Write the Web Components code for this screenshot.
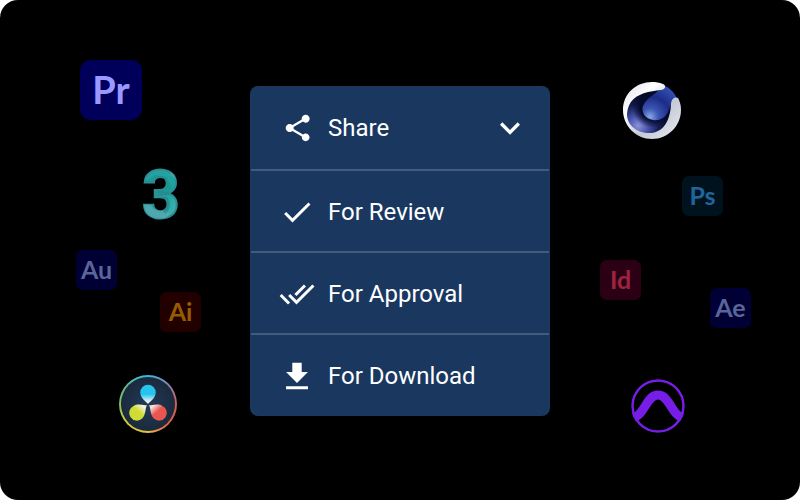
<!DOCTYPE html>
<html lang="en">
<head>
<meta charset="utf-8">
<meta name="viewport" content="width=device-width, initial-scale=1">
<title>Share</title>
<style>
  body {
    margin: 0;
    background: #fff;
    font-family: Roboto, "Liberation Sans", sans-serif;
  }
</style>
</head>
<body>

<share-stage>
  <app-tile slot="apps" size="large" style="--x: -320px; --y: -190px; --tile: #00005b; --ink: #9999ff">Pr</app-tile>
  <app-logo slot="apps" name="max" style="--x: -269px; --y: -100px"></app-logo>
  <app-tile slot="apps" style="--x: -324px; --y: 0px; --tile: #000035; --ink: #5a659a">Au</app-tile>
  <app-tile slot="apps" style="--x: -240px; --y: 42px; --tile: #220000; --ink: #985c00">Ai</app-tile>
  <app-logo slot="apps" name="resolve" style="--x: -281px; --y: 125px"></app-logo>

  <app-logo slot="apps" name="cinema" style="--x: 222px; --y: -170px"></app-logo>
  <app-tile slot="apps" style="--x: 282px; --y: -74px; --tile: #00121e; --ink: #1f659c">Ps</app-tile>
  <app-tile slot="apps" style="--x: 200px; --y: 10px; --tile: #2c0014; --ink: #9c2440">Id</app-tile>
  <app-tile slot="apps" style="--x: 310px; --y: 38px; --tile: #000035; --ink: #5a659a">Ae</app-tile>
  <app-logo slot="apps" name="protools" style="--x: 230px; --y: 128px"></app-logo>

  <share-menu>
    <menu-row icon="share" chevron>Share</menu-row>
    <menu-row icon="check">For Review</menu-row>
    <menu-row icon="checks">For Approval</menu-row>
    <menu-row icon="download">For Download</menu-row>
  </share-menu>
</share-stage>

<script>
const ICONS = {
  share: ['-2 -1.5 27 27', 'M18 16.08c-.76 0-1.44.3-1.96.77L8.91 12.7c.05-.23.09-.46.09-.7s-.04-.47-.09-.7l7.05-4.11c.54.5 1.25.81 2.04.81 1.66 0 3-1.34 3-3s-1.34-3-3-3-3 1.34-3 3c0 .24.04.47.09.7L8.04 9.81C7.5 9.31 6.79 9 6 9c-1.66 0-3 1.34-3 3s1.34 3 3 3c.79 0 1.5-.31 2.04-.81l7.12 4.16c-.05.21-.08.43-.08.65 0 1.61 1.31 2.92 2.92 2.92s2.92-1.31 2.92-2.92-1.31-2.92-2.92-2.92z'],
  check: ['0 0 24 24', 'M9 16.17 4.83 12l-1.42 1.41L9 19 21 7l-1.41-1.41z'],
  checks: ['0 0 24 24', 'M18 7l-1.41-1.41-6.34 6.34 1.41 1.41L18 7zm4.24-1.41L11.66 16.17 7.48 12l-1.41 1.41L11.66 19l12-12-1.42-1.41zM.41 13.41 6 19l1.41-1.41L1.83 12 .41 13.41z'],
  download: ['0.5 0 23 23', 'M19 9h-4V3H9v6H5l7 7 7-7zM5 18v2h14v-2H5z'],
  chevron: ['0 0 24 24', 'M16.59 8.59 12 13.17 7.41 8.59 6 10l6 6 6-6z']
}

const LOGOS = {
  max: `
    <svg width="60" height="90" viewBox="0 0 60 90">
      <defs>
        <linearGradient id="teal" x1="0" y1="0" x2="1" y2="1">
          <stop offset="0" stop-color="#2b9fa3"/>
          <stop offset=".6" stop-color="#1fa59d"/>
          <stop offset="1" stop-color="#6cc0c4"/>
        </linearGradient>
        <clipPath id="digit"><text x="30" y="68" class="three">3</text></clipPath>
      </defs>
      <text x="30" y="68" class="three" fill="url(#teal)" stroke="#2b8f96" stroke-width="2">3</text>
      <g clip-path="url(#digit)">
        <path d="M10 34h18c1-4 6-4 7 0 1 5-3 7-8 7v4h10l4-8-5-10-12-2z" fill="#1a8388" opacity=".35"/>
        <path d="M12 52l9 4c2 5 8 5 10 2l8 6-8 8H16z" fill="#5aa9b2" opacity=".8"/>
        <path d="M38 24c8 4 10 12 5 20 6 6 6 16-2 24h10V20z" fill="#62b3b9" opacity=".6"/>
        <path d="M26 47c9 0 11 4 9 9l-4 4 3 4c6-4 6-12 2-17z" fill="#1b7f86" opacity=".5"/>
      </g>
    </svg>`,
  resolve: `
    <svg class="ring" width="58" height="58" viewBox="0 0 60 60">
      <defs>
        <radialGradient id="disc"><stop offset="0" stop-color="#223a58"/><stop offset="1" stop-color="#1b2a3c"/></radialGradient>
        <linearGradient id="blue" x1="0" y1="0" x2="0" y2="1"><stop offset=".5" stop-color="#27c5ee"/><stop offset=".85" stop-color="#e6eef6"/></linearGradient>
        <linearGradient id="lime" x1="0" y1="1" x2="1" y2="0"><stop offset=".55" stop-color="#d0dc35"/><stop offset=".85" stop-color="#f4f4e6"/></linearGradient>
        <linearGradient id="red" x1="1" y1="1" x2="0" y2="0"><stop offset=".55" stop-color="#e9564f"/><stop offset=".85" stop-color="#f8e4e4"/></linearGradient>
      </defs>
      <circle cx="30" cy="30" r="28" fill="url(#disc)"/>
      <path d="M30 30c-2-3-8-6-8-12a8 8 0 0 1 16 0c0 6-6 9-8 12z" fill="url(#blue)"/>
      <path d="M29 31c-2 3-1 10-5 14a8 8 0 1 1-9-13c5-3 10 0 14-1z" fill="url(#lime)"/>
      <path d="M31 31c2 3 1 10 5 14a8 8 0 1 0 9-13c-5-3-10 0-14-1z" fill="url(#red)"/>
    </svg>`,
  cinema: `
    <svg width="60" height="60" viewBox="0 0 60 60">
      <defs>
        <radialGradient id="well" gradientUnits="userSpaceOnUse" cx="16" cy="46" r="30">
          <stop offset="0" stop-color="#8a92da"/>
          <stop offset=".35" stop-color="#4552a8"/>
          <stop offset=".7" stop-color="#141c50"/>
          <stop offset="1" stop-color="#070b28"/>
        </radialGradient>
        <radialGradient id="shade" gradientUnits="userSpaceOnUse" cx="31" cy="27" r="21">
          <stop offset=".6" stop-color="#050a2c"/>
          <stop offset="1" stop-color="#050a2c" stop-opacity="0"/>
        </radialGradient>
        <radialGradient id="drop" gradientUnits="userSpaceOnUse" cx="28" cy="37" r="34">
          <stop offset="0" stop-color="#8ba6e6"/>
          <stop offset=".25" stop-color="#3b56b4"/>
          <stop offset=".6" stop-color="#1c2c86"/>
          <stop offset="1" stop-color="#3350b4"/>
        </radialGradient>
        <linearGradient id="shell" x1="0" y1="0" x2="1" y2="1">
          <stop offset="0" stop-color="#d9dde8"/>
          <stop offset=".3" stop-color="#fff"/>
          <stop offset=".6" stop-color="#c4c9d6"/>
          <stop offset="1" stop-color="#eceef4"/>
        </linearGradient>
      </defs>
      <circle cx="30" cy="30" r="28" fill="url(#well)"/>
      <circle cx="31" cy="27" r="21" fill="url(#shade)"/>
      <path d="M41 5c7 3 12 8 14 14-5 2-7 8-9 13-3 6-9 9-15 8-8-1-12-8-10-14 3-9 15-12 20-21z" fill="url(#drop)"/>
      <path d="M41 4C22-3 1 9 1 30c0 16 13 29 29 29s29-13 29-29c0-5-1-8-3-12-4-2-7 2-7 7-1 14-6 26-19 28C16 54 5 46 5 34 6 21 14 15 26 12l12-2c5 0 7-4 3-6z" fill="url(#shell)"/>
    </svg>`,
  protools: `
    <svg width="56" height="56" viewBox="0 0 56 56">
      <defs><clipPath id="lens"><circle cx="28" cy="28" r="27"/></clipPath></defs>
      <g fill="none" stroke="#761ee8" clip-path="url(#lens)">
        <circle cx="28" cy="28" r="25.5" stroke-width="2.5"/>
        <path d="M-1 40C15 41 15 17 28 17s13 24 29 23" stroke-width="9"/>
      </g>
    </svg>`
}

class ShareStage extends HTMLElement {

    constructor() {
        super();
        this.attachShadow({ mode: 'open' });
        this.shadowRoot.innerHTML = `
        <style>
          :host {
            box-sizing: border-box;
            position: relative;
            display: flex;
            align-items: center;
            justify-content: center;
            min-height: 100vh;
            padding-top: 2px;
            border-radius: 18px;
            background: #000;
            overflow: hidden;
          }

          /* the app marks float round the centre of the stage */
          ::slotted([slot="apps"]) {
            position: absolute;
            left: calc(50% + var(--x));
            top: calc(50% + var(--y));
          }
        </style>
        <slot name="apps"></slot>
        <slot></slot>
        `
    }
}

class ShareMenu extends HTMLElement {

    constructor() {
        super();
        this.attachShadow({ mode: 'open' });
        this.shadowRoot.innerHTML = `
        <style>
          :host {
            position: relative;
            box-sizing: border-box;
            display: flex;
            flex-direction: column;
            width: 100%;
            max-width: 300px;
            padding: 0 1px 1px;
            border-radius: 8px;
            background: #19375f;
            color: #fff;
          }

          ::slotted(:not(:first-child)) {
            border-top: 2px solid #415d7c;
          }
        </style>
        <slot></slot>
        `
    }
}

class MenuRow extends HTMLElement {

    constructor() {
        super();
        this.attachShadow({ mode: 'open' });
        const chevron = this.hasAttribute('chevron')
        this.shadowRoot.innerHTML = `
        <style>
          :host {
            display: block;
          }

          button {
            box-sizing: border-box;
            display: flex;
            align-items: center;
            gap: 13px;
            width: 100%;
            height: 80px;
            padding: 2px 19px 0 28px;
            border: 0;
            background: none;
            color: inherit;
            font: inherit;
            font-size: 24px;
            line-height: 32px;
            text-align: left;
            cursor: pointer;
          }

          :host([chevron]) button {
            height: 83px;
            padding-top: 0;
          }

          span {
            flex: 1;
          }

          svg {
            flex: none;
            fill: currentColor;
          }
        </style>
        <button type="button" ${chevron ? 'aria-expanded="true"' : ''}>
          ${this.icon(this.getAttribute('icon'), 36)}
          <span><slot></slot></span>
          ${chevron ? this.icon('chevron', 40) : ''}
        </button>
        `
    }

    icon(name, size) {
        const [box, path] = ICONS[name]
        return `<svg width="${size}" height="${size}" viewBox="${box}" aria-hidden="true"><path d="${path}"/></svg>`
    }
}

class AppTile extends HTMLElement {

    constructor() {
        super();
        this.attachShadow({ mode: 'open' });
        this.shadowRoot.innerHTML = `
        <style>
          :host {
            box-sizing: border-box;
            display: flex;
            align-items: center;
            justify-content: center;
            width: 41px;
            height: 40px;
            padding-bottom: 2px;
            border-radius: 7px;
            background: var(--tile);
            color: var(--ink);
            font: 700 25px/36px Lato, "Open Sans", sans-serif;
          }

          :host([size="large"]) {
            width: 62px;
            height: 60px;
            border-radius: 11px;
            font-size: 38px;
            line-height: 56px;
          }
        </style>
        <slot></slot>
        `
    }
}

class AppLogo extends HTMLElement {

    constructor() {
        super();
        this.attachShadow({ mode: 'open' });
        this.shadowRoot.innerHTML = `
        <style>
          :host {
            display: block;
          }

          svg {
            display: block;
          }

          .three {
            font: bold 66px Roboto, sans-serif;
            text-anchor: middle;
          }

          .ring {
            border-radius: 50%;
            background: conic-gradient(#35b8e0, #8a7fb0 45deg, #d0605c 90deg, #e8603c 135deg, #e8c040 180deg, #c8d040 235deg, #80c060 275deg, #35b8e0);
          }
        </style>
        ${LOGOS[this.getAttribute('name')]}
        `
    }
}

window.customElements.define('share-stage', ShareStage);
window.customElements.define('share-menu', ShareMenu);
window.customElements.define('menu-row', MenuRow);
window.customElements.define('app-tile', AppTile);
window.customElements.define('app-logo', AppLogo);
</script>
</body>
</html>
